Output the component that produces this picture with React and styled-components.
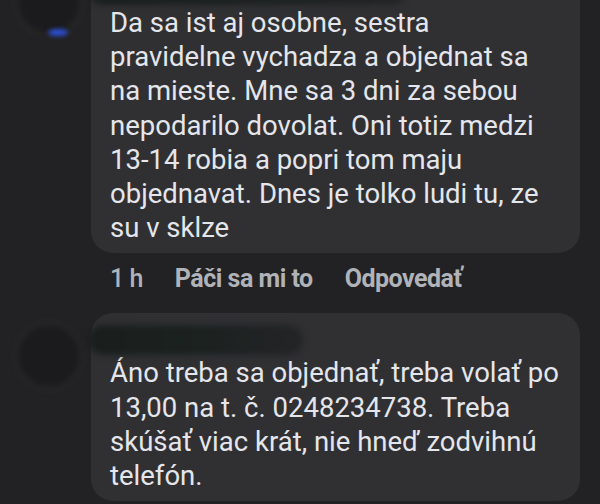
import styled, { createGlobalStyle } from "styled-components";

const GlobalStyle = createGlobalStyle`
  html, body {
    margin: 0;
    background: #222224;
    overflow: hidden;
  }
`;

const Page = styled.div`
  width: 600px;
  height: 504px;
  overflow: hidden;
  font-family: Roboto, "Noto Sans", sans-serif;
`;

const Thread = styled.div`
  margin-top: -37px; // first comment is cut off by the top of the screenshot
`;

const Comment = styled.div`
  display: flex;
  padding-right: 20px;
`;

const AvatarCol = styled.div`
  width: 91px;
  flex-shrink: 0;
  position: relative;
`;

// avatars are blurred out in the screenshot
const BlurredAvatar = styled.div`
  position: absolute;
  left: 18px;
  top: ${(p) => p.$top}px;
  width: 62px;
  height: 62px;
  border-radius: 50%;
  background: #1b1b1d;
  box-shadow: 0 0 6px 1px rgba(120, 120, 120, 0.18);
  filter: blur(3px);
`;

const BlueGlow = styled.div`
  position: absolute;
  left: 48px;
  top: 66px;
  width: 20px;
  height: 7px;
  border-radius: 50%;
  background: #2a4fd6;
  filter: blur(2px);
`;

const Body = styled.div`
  flex: 1;
  min-width: 0;
`;

const Bubble = styled.div`
  background: #303033;
  border-radius: 22px;
  padding: 10px 12px 8px 19px;
`;

const NameRow = styled.div`
  height: 33px;
  display: flex;
  align-items: center;
`;

const BlurredName = styled.div`
  width: ${(p) => p.$w}px;
  height: 30px;
  margin-left: -22px;
  border-radius: 15px;
  background: linear-gradient(90deg, #1a1e1d, #1c2220 55%, #242426);
  filter: blur(3px);
`;

const Text = styled.p`
  margin: 0;
  color: #e4e6eb;
  font-size: 27.5px;
  line-height: 34.2px;
  white-space: nowrap;
`;

const Actions = styled.div`
  display: flex;
  gap: 32px;
  height: 51px;
  padding: 0 0 9px 19px;
  align-items: center;
  color: #b0b3b8;
  font-size: 25px;
  font-weight: 700;
  letter-spacing: -0.5px;
`;

const Time = styled.span`
  font-weight: 500;
`;

export default function App() {
  return (
    <Page>
      <GlobalStyle />
      <Thread>
        <Comment>
          <AvatarCol>
            <BlurredAvatar $top={8} />
            <BlueGlow />
          </AvatarCol>
          <Body>
            <Bubble>
              <NameRow>
                <BlurredName $w={320} />
              </NameRow>
              <Text>
                Da sa ist aj osobne, sestra
                <br />
                pravidelne vychadza a objednat sa
                <br />
                na mieste. Mne sa 3 dni za sebou
                <br />
                nepodarilo dovolat. Oni totiz medzi
                <br />
                13-14 robia a popri tom maju
                <br />
                objednavat. Dnes je tolko ludi tu, ze
                <br />
                su v sklze
              </Text>
            </Bubble>
            <Actions>
              <Time>1 h</Time>
              <span>Páči sa mi to</span>
              <span>Odpovedať</span>
            </Actions>
          </Body>
        </Comment>
        <Comment>
          <AvatarCol>
            <BlurredAvatar $top={12} />
          </AvatarCol>
          <Body>
            <Bubble>
              <NameRow>
                <BlurredName $w={215} />
              </NameRow>
              <Text>
                Áno treba sa objednať, treba volať po
                <br />
                13,00 na t. č. 0248234738. Treba
                <br />
                skúšať viac krát, nie hneď zodvihnú
                <br />
                telefón.
              </Text>
            </Bubble>
          </Body>
        </Comment>
      </Thread>
    </Page>
  );
}
